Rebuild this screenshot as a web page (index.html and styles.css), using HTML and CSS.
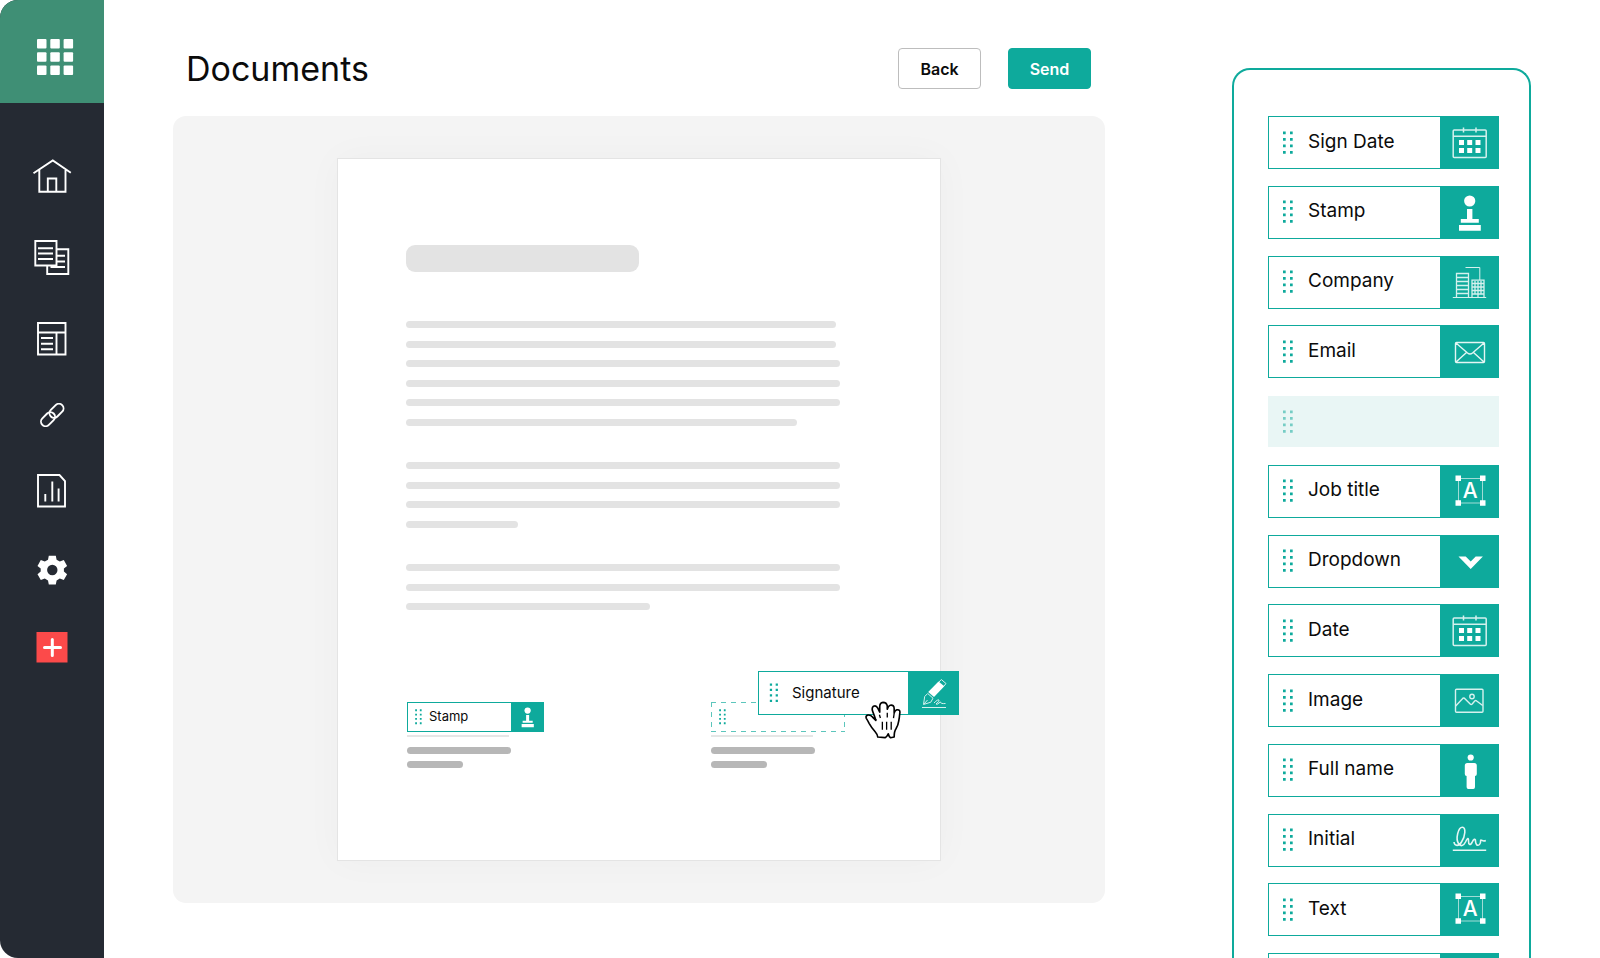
FILE: index.html
```html
<!DOCTYPE html>
<html lang="en">
<head>
<meta charset="utf-8">
<title>Documents</title>
<link rel="stylesheet" href="styles.css">
</head>
<body>
<svg class="sprite" aria-hidden="true">
  <symbol id="dots" viewBox="0 0 10 24">
    <path d="M0 .5h2.700v2.700H0zM7 .5h2.700v2.700H7zM0 7h2.700v2.700H0zM7 7h2.700v2.700H7zM0 13.500h2.700v2.700H0zM7 13.500h2.700v2.700H7zM0 20h2.700v2.700H0zM7 20h2.700v2.700H7z" fill="currentColor"/>
  </symbol>
  <symbol id="calendar" viewBox="0 0 59 53">
    <g fill="none" stroke="#d5f1ee" stroke-width="1.5"><rect x="13.2" y="14" width="33" height="27.5" rx="1"/><path d="M13 20.3h33M23.5 11.5v5M36 11.5v5"/></g>
    <path d="M19 24h5v5h-5zM27.200 24h5v5h-5zM35.500 24h5v5h-5zM19 32h5v5h-5zM27.200 32h5v5h-5zM35.500 32h5v5h-5z" fill="#fff"/>
  </symbol>
  <symbol id="stamp" viewBox="0 0 59 53">
    <g fill="#fff"><circle cx="29.700" cy="15" r="5.600"/><path d="M27 23h5.400v10h6.400v3.700h-18V33H27zM19 39h21.800v5.800H19z"/></g>
  </symbol>
  <symbol id="company" viewBox="0 0 59 53">
    <g fill="none" stroke="#d5f1ee">
      <path d="M12.800 41.500h33.400M25.500 11.500h14.300V24"/>
      <path stroke-width="1.300" d="M16.500 41.500v-24h12v24M17 21.500h11M17 25.500h11M17 29.500h11M17 33.500h11M17 37.500h11"/>
      <path stroke-width="1.300" d="M32 41.500V24.200h12v17.300M35 25v13M38 25v16M41 25v13M32 27.500h12M32 31h12M32 34.500h12M32 38h12"/>
    </g>
  </symbol>
  <symbol id="email" viewBox="0 0 59 53">
    <path d="M16.500 17.500h27q1 0 1 1v18q0 1-1 1h-27q-1 0-1-1v-18q0-1 1-1zM16 18l11.500 10q2.500 2 5 0L44 18M16 37l10.500-9.500M44 37l-10.500-9.500" fill="none" stroke="#e4f6f4" stroke-width="1.400"/>
  </symbol>
  <symbol id="textbox" viewBox="0 0 59 53">
    <path d="M18.500 13.500h24v24.500h-24z" fill="none" stroke="#9fdcd6"/>
    <path d="M15.500 10.500H21V16h-5.500zM40 10.500h5.500V16H40zM15.500 35.300H21v5.500h-5.500zM40 35.300h5.500v5.500H40z" fill="#fff"/>
    <text x="30.300" y="33" class="glyph">A</text>
  </symbol>
  <symbol id="chevron" viewBox="0 0 59 53">
    <path d="M18.500 21.500h7.200l5 5 5-5h7.200L30.700 34z" fill="#fff"/>
  </symbol>
  <symbol id="image" viewBox="0 0 59 53">
    <g fill="none" stroke="#d5f1ee" stroke-width="1.400"><rect x="15.500" y="15.200" width="27.500" height="23" rx="1"/><circle cx="32" cy="22.500" r="2.200"/><path d="M15.700 32l6.500-7q1.500-2 3 0l5 5q1 1 2 0l2.500-3q1-1 2 0l6 4.500"/></g>
  </symbol>
  <symbol id="person" viewBox="0 0 59 53">
    <g fill="#fff"><circle cx="30.700" cy="13.500" r="3.100"/><path d="M27.300 19h7q2.500 0 2.500 2.500V30q0 2-1.800 2v11q0 2-1.700 2h-5q-1.700 0-1.700-2V32q-1.800 0-1.800-2v-8.500q0-2.500 2.500-2.500z"/></g>
  </symbol>
  <symbol id="initial" viewBox="0 0 59 53">
    <path d="M12.800 36.300h33.400" fill="none" stroke="#e4f6f4" stroke-width="1.600"/>
    <path d="M14 28c.500 4.500 5 4.500 7.500 0 4-6 4.500-14.500 1-14.800C18 13 15.500 25 18.500 29.500c2.500 4 5.500 1.500 7-1.500 2-4.500 3-4.500 3-1s1.500 5 3.500 1.500c1.500-3.500 3.500-4.500 3.500-1.500s1.500 5.500 4 3.500c2-1.800.500-4.500 1.500-4.500s2 2 4.800.500" fill="none" stroke="#e4f6f4" stroke-width="1.600"/>
  </symbol>
  <symbol id="pen" viewBox="0 0 51 44">
    <g fill="none" stroke="#d5f1ee"><path d="M14 36.500h24M15.500 33.500l1.200-8 3-3 5.300 4.700-2.200 4zM16 33l3.500-4M26 32q4-4 5-3t-3 4q1 1 3-1l1.500-1q0 2 5 1.500M31 11l2.300-2.500 4.700 4-2 2.500"/></g>
    <path d="M20.200 21L30.500 10.500l5.800 4.800L26 26z" fill="#fff"/>
  </symbol>
</svg>

<div class="app">
  <aside class="sidebar">
    <button class="launcher" aria-label="Apps">
      <svg width="37" height="37" viewBox="0 0 37 37"><g fill="#fff"><rect width="9.500" height="9.500" rx="1"/><rect x="13.300" width="9.500" height="9.500" rx="1"/><rect x="26.600" width="9.500" height="9.500" rx="1"/><rect y="13.300" width="9.500" height="9.500" rx="1"/><rect x="13.300" y="13.300" width="9.500" height="9.500" rx="1"/><rect x="26.600" y="13.300" width="9.500" height="9.500" rx="1"/><rect y="26.600" width="9.500" height="9.500" rx="1"/><rect x="13.300" y="26.600" width="9.500" height="9.500" rx="1"/><rect x="26.600" y="26.600" width="9.500" height="9.500" rx="1"/></g></svg>
    </button>
    <nav class="nav" aria-label="Main">
      <a href="#home" aria-label="Home"><svg width="40" height="34" viewBox="32 160 40 34"><path d="M33.500 174.300l19.300-12.800 18 12.300M39.300 171v21.800h26.200V171M47.800 192.500v-13h8.500v13" fill="none" stroke="#fff" stroke-width="1.900"/></svg></a>
      <a href="#documents" aria-label="Documents"><svg width="40" height="35" viewBox="32 240 40 35"><path d="M35.300 241h21.200v24.500H35.300zM56.500 249.200h11.800V274H47.200v-8.500M38 248.200h15M38 253.500h15M38 259h15M57 255.700h8M57 261.500h8M50.500 267h14.500" fill="none" stroke="#fff" stroke-width="1.900"/></svg></a>
      <a href="#templates" aria-label="Templates"><svg width="40" height="34" viewBox="32 321 40 34"><path d="M38 322h27.500v31.500H38zM38 331.500h27.500M56.500 331.500v22M41 337h12M41 342.700h12M41 348.300h12" fill="none" stroke="#fff" stroke-width="1.900"/></svg></a>
      <a href="#links" aria-label="Links"><svg width="40" height="24" viewBox="32 402 40 24"><g fill="none" stroke="#fff" stroke-width="1.900"><rect x="-8" y="-4.600" width="16" height="9.200" rx="4.600" transform="translate(56.500 409.800) rotate(-45)"/><rect x="-8" y="-4.600" width="16" height="9.200" rx="4.600" transform="translate(48 418.200) rotate(-45)"/></g></svg></a>
      <a href="#reports" aria-label="Reports"><svg width="40" height="34" viewBox="32 473 40 34"><path d="M38 474h21.500l5.500 6v25.500H38zM45.300 493v7.500M52.300 480.500v20M58.600 487.500v13" fill="none" stroke="#fff" stroke-width="1.900"/></svg></a>
      <a href="#settings" aria-label="Settings"><svg width="40" height="30" viewBox="32 553.500 40 30"><g fill="#fff" transform="translate(52.300 568.500)"><path fill-rule="evenodd" d="M-3.500-14.300h7l.8 4 3.200 1.800 4-1.400 3.300 5.800L11.600-1.500v3l3.200 2.700-3.300 5.800-4-1.400-3.200 1.800-.8 4h-7l-.8-4-3.200-1.800-4 1.400-3.300-5.800 3.200-2.700v-3l-3.200-2.600 3.300-5.800 4 1.400 3.200-1.800zM0-5.200a5.200 5.200 0 1 0 0 10.400A5.200 5.200 0 1 0 0-5.200z"/></g></svg></a>
      <a href="#new" aria-label="New"><svg width="40" height="31" viewBox="32 631.500 40 31"><path d="M36.500 631.500h31v30.500h-31z" fill="#fc4a4a"/><path d="M44.500 647h16M52.300 639v16" stroke="#fff" stroke-width="3" stroke-linecap="round"/></svg></a>
    </nav>
  </aside>

  <main class="main">
    <header class="header">
      <h1 class="title">Documents</h1>
      <div class="actions">
        <button class="btn">Back</button>
        <button class="btn btn-primary">Send</button>
      </div>
    </header>
    <section class="workspace" aria-label="Document preview">
      <article class="page">
        <div class="heading-bar"></div>
        <div class="para para-six">
          <i class="line w-430"></i><i class="line w-430"></i><i class="line"></i><i class="line"></i><i class="line"></i><i class="line w-391"></i>
        </div>
        <div class="para para-four">
          <i class="line"></i><i class="line"></i><i class="line"></i><i class="line w-112"></i>
        </div>
        <div class="para para-three">
          <i class="line"></i><i class="line"></i><i class="line w-244"></i>
        </div>
        <div class="signers">
          <div class="signer">
            <button class="chip chip-small"><svg class="dots"><use href="#dots"/></svg><span class="label">Stamp</span><span class="icon"><svg viewBox="0 0 59 53"><use href="#stamp"/></svg></span></button>
            <div class="rule"></div><div class="bar"></div><div class="bar bar-short"></div>
          </div>
          <div class="signer">
            <div class="drop"><svg class="dots"><use href="#dots"/></svg></div>
            <div class="rule"></div><div class="bar"></div><div class="bar bar-short"></div>
            <button class="chip chip-drag"><svg class="dots"><use href="#dots"/></svg><span class="label">Signature</span><span class="icon"><svg viewBox="0 0 51 44"><use href="#pen"/></svg></span></button>
            <svg class="hand" viewBox="524 150 116 116"><path d="M563 260q-1-8-8-16-12-14-18-25-5-10-9-16-3-8 5-10 8-1 14 6l10 10q-4-14-9-26-5-11 2-17 8-4 13 6l6 12q0-10 0-17 0-12 10-13 11 0 13 11v10q3-10 9-12 12-2 12 10v14q2-8 8-10 12-2 9 12-1 12-3 22-2 14-8 23-6 8-6 26l-11 2q-5-3-7-12-3 8-10 12z" fill="#fff" stroke="#000" stroke-width="5" stroke-linejoin="round"/><path d="M557 209v-4M568 192l3 10M592 186v14M613 188l-2 14M577 213v25M590 213v25M604 213v25" fill="none" stroke="#000" stroke-width="4"/></svg>
          </div>
        </div>
      </article>
    </section>
  </main>

  <aside class="panel" aria-label="Fields">
    <div class="fields">
      <button class="chip"><svg class="dots"><use href="#dots"/></svg><span class="label">Sign Date</span><span class="icon"><svg><use href="#calendar"/></svg></span></button>
      <button class="chip"><svg class="dots"><use href="#dots"/></svg><span class="label">Stamp</span><span class="icon"><svg><use href="#stamp"/></svg></span></button>
      <button class="chip"><svg class="dots"><use href="#dots"/></svg><span class="label">Company</span><span class="icon"><svg><use href="#company"/></svg></span></button>
      <button class="chip"><svg class="dots"><use href="#dots"/></svg><span class="label">Email</span><span class="icon"><svg><use href="#email"/></svg></span></button>
      <div class="chip chip-empty"><svg class="dots"><use href="#dots"/></svg></div>
      <button class="chip"><svg class="dots"><use href="#dots"/></svg><span class="label">Job title</span><span class="icon"><svg><use href="#textbox"/></svg></span></button>
      <button class="chip"><svg class="dots"><use href="#dots"/></svg><span class="label">Dropdown</span><span class="icon"><svg><use href="#chevron"/></svg></span></button>
      <button class="chip"><svg class="dots"><use href="#dots"/></svg><span class="label">Date</span><span class="icon"><svg><use href="#calendar"/></svg></span></button>
      <button class="chip"><svg class="dots"><use href="#dots"/></svg><span class="label">Image</span><span class="icon"><svg><use href="#image"/></svg></span></button>
      <button class="chip"><svg class="dots"><use href="#dots"/></svg><span class="label">Full name</span><span class="icon"><svg><use href="#person"/></svg></span></button>
      <button class="chip"><svg class="dots"><use href="#dots"/></svg><span class="label">Initial</span><span class="icon"><svg><use href="#initial"/></svg></span></button>
      <button class="chip"><svg class="dots"><use href="#dots"/></svg><span class="label">Text</span><span class="icon"><svg><use href="#textbox"/></svg></span></button>
      <div class="chip"><span class="label"></span><span class="icon"></span></div>
    </div>
  </aside>
</div>
</body>
</html>
```
FILE: styles.css
```css
* { box-sizing: border-box; }

:root {
  --teal: #0eaa9c;
  --navy: #252a33;
  --green: #3f8f75;
}

body {
  margin: 0;
  background: #fff;
  color: #0b0b0b;
  font-family: Inter, "Liberation Sans", sans-serif;
}

button { font: inherit; color: inherit; cursor: pointer; }
svg { display: block; }
.sprite { display: none; }

.app {
  display: flex;
  height: 100vh;
  overflow: hidden;
}

/* Sidebar */
.sidebar {
  flex: none;
  width: 104px;
  background: var(--navy);
  border-radius: 18px 0 0 18px;
  overflow: hidden;
}
.launcher {
  display: flex;
  width: 100%;
  height: 103px;
  padding: 39px 0 0 37px;
  border: 0;
  background: var(--green);
}
.nav {
  display: flex;
  flex-direction: column;
  align-items: center;
  gap: 47px;
  padding-top: 56px;
}

/* Main column */
.main {
  flex: 1;
  min-width: 0;
  padding: 48px 0 0 69px;
}
.header {
  display: flex;
  justify-content: space-between;
  align-items: center;
  padding: 0 14px 0 13px;
  margin-bottom: 27px;
}
.title {
  margin: 0;
  font-size: 34px;
  font-weight: 400;
  line-height: 40px;
}
.actions { display: flex; gap: 27px; }
.btn {
  width: 83px;
  height: 41px;
  padding: 0;
  border: 1px solid #bdbdbd;
  border-radius: 4px;
  background: #fff;
  font-size: 16px;
  font-weight: 600;
}
.btn-primary {
  border-color: var(--teal);
  background: var(--teal);
  color: #fff;
}

.workspace {
  display: flex;
  justify-content: center;
  padding: 42px 0;
  border-radius: 13px;
  background: #f4f4f4;
}
.page {
  width: 604px;
  padding: 86px 68px 92px;
  border: 1px solid #e4e4e4;
  background: #fff;
  box-shadow: 0 0 36px rgba(0, 0, 0, 0.03);
}
.heading-bar {
  width: 233px;
  height: 27px;
  margin-bottom: 49px;
  border-radius: 9px;
  background: #e3e3e3;
}
.para {
  display: flex;
  flex-direction: column;
  justify-content: space-between;
  margin-bottom: 36px;
}
.para-six { height: 105px; }
.para-four { height: 66px; }
.para-three { height: 46px; margin-bottom: 92px; }
.line {
  width: 434px;
  height: 7px;
  border-radius: 4px;
  background: #e3e3e3;
}
.w-430 { width: 430px; }
.w-391 { width: 391px; }
.w-244 { width: 244px; }
.w-112 { width: 112px; }

.signers { display: flex; gap: 167px; padding-left: 1px; }
.signer { position: relative; width: 137px; }
.rule {
  width: 102px;
  height: 2px;
  margin: 3px 0 10px;
  background: #e6e6e6;
}
.bar {
  width: 104px;
  height: 7px;
  margin-bottom: 7px;
  border-radius: 4px;
  background: #b7b7b7;
}
.bar-short { width: 56px; margin-bottom: 0; }

/* Drop target with a long-dash outline */
.drop {
  --dash: #5cc6bc 0 5px, transparent 5px 10px;
  width: 134px;
  height: 30px;
  padding: 7px 8px;
  background:
    repeating-linear-gradient(90deg, var(--dash)) top / 100% 1px no-repeat,
    repeating-linear-gradient(90deg, var(--dash)) bottom / 100% 1px no-repeat,
    repeating-linear-gradient(var(--dash)) left / 1px 100% no-repeat,
    repeating-linear-gradient(var(--dash)) right / 1px 100% no-repeat;
}

/* Draggable fields */
.chip {
  display: flex;
  align-items: center;
  width: 231px;
  height: 53px;
  padding: 0 0 0 14px;
  border: 1px solid var(--teal);
  background: #fff;
  font-size: 19px;
  line-height: 24px;
  text-align: left;
}
.dots { flex: none; width: 10px; height: 24px; color: var(--teal); }
.label { flex: 1; padding: 0 0 2px 15px; }
.icon {
  display: flex;
  flex: none;
  align-items: center;
  justify-content: center;
  align-self: stretch;
  width: 58px;
  background: var(--teal);
}
.icon svg { flex: none; width: 59px; height: 53px; }
.glyph {
  fill: #fff;
  font-size: 21px;
  font-weight: 500;
  text-anchor: middle;
}
.chip-empty {
  height: 51px;
  margin: 1px 0;
  border-color: #e9f6f5;
  background: #e9f6f5;
}
.chip-empty .dots { color: #76cdc5; }

.chip-small { width: 137px; height: 30px; padding-left: 7px; font-size: 13px; line-height: 16px; }
.chip-small .dots, .drop .dots { width: 7px; height: 16px; }
.chip-small .label { padding-left: 7px; }
.chip-small .icon { width: 32px; }
.chip-small .icon svg { width: 33px; height: 30px; }

.chip-drag {
  position: absolute;
  top: -31px;
  left: 47px;
  width: 201px;
  height: 44px;
  padding-left: 10px;
  font-size: 15px;
  line-height: 20px;
}
.chip-drag .dots { height: 20px; }
.chip-drag .label { padding: 0 0 0 13px; }
.chip-drag .icon { width: 50px; }
.chip-drag .icon svg { width: 51px; height: 44px; }
.hand {
  position: absolute;
  top: -1px;
  left: 154px;
  width: 38px;
  height: 38px;
}

/* Field panel */
.panel {
  flex: none;
  width: 299px;
  margin: 68px 69px 0 127px;
  padding: 46px 0 0 34px;
  border: 2px solid var(--teal);
  border-bottom: 0;
  border-radius: 18px 18px 0 0;
  overflow: hidden;
}
.fields {
  display: flex;
  flex-direction: column;
  justify-content: space-between;
  height: 890px;
}
```
